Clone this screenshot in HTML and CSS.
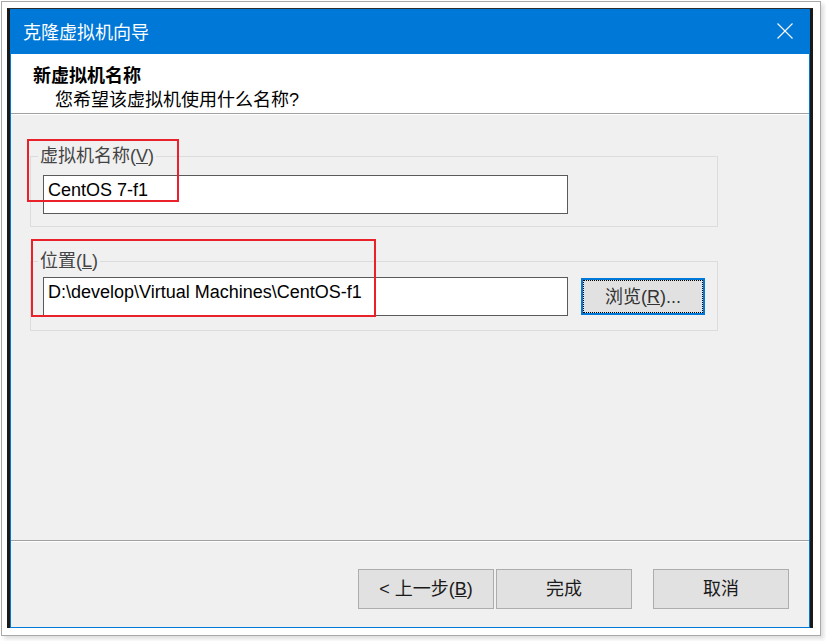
FILE: index.html
```html
<!DOCTYPE html>
<html lang="zh-CN">
<head>
<meta charset="utf-8">
<title>克隆虚拟机向导</title>
<link rel="stylesheet" href="styles.css">
</head>
<body>
<div class="frame">
  <div class="window">
    <div class="inner">
      <div class="titlebar">
        <span class="title-text">克隆虚拟机向导</span>
        <svg class="close" width="16" height="16" viewBox="0 0 16 16"><path d="M0.5 0.5 L15.5 15.5 M15.5 0.5 L0.5 15.5" stroke="#fff" stroke-width="1.1" fill="none"/></svg>
      </div>
      <div class="header">
        <div class="header-title">新虚拟机名称</div>
        <div class="header-sub">您希望该虚拟机使用什么名称?</div>
      </div>
      <div class="content">
        <fieldset class="group group-name">
          <legend class="group-label">虚拟机名称(<u>V</u>)</legend>
          <div class="textbox">CentOS 7-f1</div>
        </fieldset>
        <fieldset class="group group-loc">
          <legend class="group-label">位置(<u>L</u>)</legend>
          <div class="row">
            <div class="textbox">D:\develop\Virtual Machines\CentOS-f1</div>
            <div class="btn btn-browse">浏览(<u>R</u>)...</div>
          </div>
        </fieldset>
      </div>
      <div class="footer">
        <div class="btn btn-back">&lt; 上一步(<u>B</u>)</div>
        <div class="btn btn-finish">完成</div>
        <div class="btn btn-cancel">取消</div>
      </div>
    </div>
  </div>
</div>
<div class="mark mark-name"></div>
<div class="mark mark-loc"></div>
</body>
</html>
```
FILE: styles.css
```css
html, body {
  margin: 0;
  padding: 0;
  background: #ffffff;
}
body {
  width: 826px;
  height: 641px;
  overflow: hidden;
  position: relative;
  font-family: "Liberation Sans", "Noto Sans CJK SC", sans-serif;
  font-size: 18px;
}
.frame {
  box-sizing: border-box;
  width: 820px;
  height: 635px;
  margin: 1px 0 0 1px;
  border: 1px solid #a9a9a9;
  padding: 6px 7px 7px 5px;
  background: #fff;
  box-shadow: 3px 3px 4px rgba(0,0,0,0.13);
}
.window {
  box-sizing: border-box;
  width: 806px;
  height: 620px;
  border-top: 1px solid #2e2e2e;
  border-left: 3px solid #1a1a1a;
  border-right: 3px solid #1a1a1a;
}
.inner {
  box-sizing: border-box;
  height: 619px;
  border: 1px solid #0078d7;
  border-top: 0;
  background: #f0f0f0;
  display: flex;
  flex-direction: column;
}
.titlebar {
  height: 45px;
  flex: none;
  background: #0078d7;
  margin: 0 -1px;
  padding: 0 17px 0 13px;
  display: flex;
  align-items: center;
  justify-content: space-between;
}
.title-text {
  color: #fff;
  font-family: "Noto Sans CJK SC", sans-serif;
  font-size: 18px;
  line-height: 20px;
  margin-top: -1px;
}
.close {
  display: block;
  margin-top: -1px;
}
.header {
  flex: none;
  height: 59px;
  box-sizing: border-box;
  background: #fff;
  border-bottom: 1px solid #a0a0a0;
  height: 60px;
  padding: 10px 0 0 22px;
  color: #000;
}
.header-title {
  font-weight: bold;
  line-height: 24px;
}
.header-sub {
  line-height: 24px;
  padding-left: 22px;
}
.content {
  flex: 1;
  border-top: 1px solid #fff;
  padding: 31px 91px 0 19px;
}
.group {
  margin: 0;
  border: 1px solid #dcdcdc;
  padding: 9px 12px 12px 12px;
  min-width: 0;
}
.group-loc {
  margin-top: 24px;
  padding-top: 6px;
  padding-bottom: 14px;
}
.group-label {
  padding: 0 2px;
  margin-left: -5px;
  line-height: 20px;
  color: #444;
}
.textbox {
  box-sizing: border-box;
  width: 525px;
  height: 39px;
  background: #fff;
  border: 1px solid #5a5a5a;
  padding: 4px 4px 0 4px;
  line-height: 20px;
  color: #000;
  white-space: nowrap;
}
.row {
  display: flex;
  align-items: flex-start;
  gap: 13px;
}
.btn {
  box-sizing: border-box;
  height: 40px;
  width: 136px;
  background: #e1e1e1;
  border: 1px solid #adadad;
  display: flex;
  align-items: center;
  justify-content: center;
  line-height: 20px;
  color: #1a1a1a;
  white-space: nowrap;
}
.btn-browse {
  width: 124px;
  height: 37px;
  margin-top: 1px;
  border: 2px solid #0078d7;
  outline: 1px dotted #000;
  outline-offset: -3px;
  color: #333;
}
.footer {
  flex: none;
  height: 87px;
  box-sizing: border-box;
  border-top: 1px solid #a0a0a0;
  box-shadow: inset 0 1px 0 #fff;
  padding: 28px 20px 0 0;
  display: flex;
  justify-content: flex-end;
  align-items: flex-start;
}
.btn-finish {
  margin-left: 2px;
}
.btn-cancel {
  margin-left: 21px;
}
.mark {
  position: absolute;
  box-sizing: border-box;
  border: 2px solid #e8212b;
}
.mark-name {
  left: 27px;
  top: 139px;
  width: 152px;
  height: 63px;
}
.mark-loc {
  left: 31px;
  top: 239px;
  width: 345px;
  height: 78px;
}
```
